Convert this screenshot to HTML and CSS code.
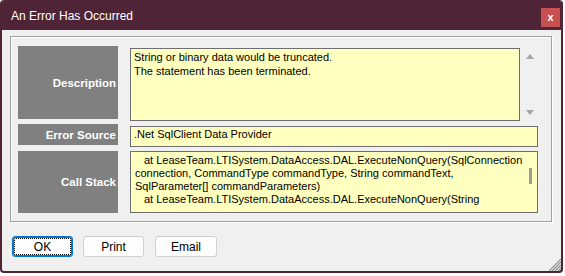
FILE: index.html
```html
<!DOCTYPE html>
<html lang="en">
<head>
    <meta charset="UTF-8">
    <title>An Error Has Occurred</title>
    <link rel="stylesheet" href="styles.css">
</head>
<body>
    <div class="window">
        <div class="titlebar">
            <span class="title">An Error Has Occurred</span>
            <button class="close" type="button">x</button>
        </div>
        <div class="content">
            <div class="group">
                <div class="field field-desc">
                    <div class="label">Description</div>
                    <div class="value value-desc">String or binary data would be truncated.<br>The statement has been terminated.</div>
                    <div class="arrows">
                        <span class="arrow-up"></span>
                        <span class="arrow-down"></span>
                    </div>
                </div>
                <div class="field field-source">
                    <div class="label">Error Source</div>
                    <div class="value value-source">.Net SqlClient Data Provider</div>
                </div>
                <div class="field field-stack">
                    <div class="label">Call Stack</div>
                    <div class="value value-stack">
                        <div class="stack-text">
                            <span class="indent">at LeaseTeam.LTISystem.DataAccess.DAL.ExecuteNonQuery(SqlConnection</span><br>
                            connection, CommandType commandType, String commandText,<br>
                            SqlParameter[] commandParameters)<br>
                            <span class="indent">at LeaseTeam.LTISystem.DataAccess.DAL.ExecuteNonQuery(String</span>
                        </div>
                        <div class="vscroll"><span class="thumb"></span></div>
                    </div>
                </div>
            </div>
            <div class="buttons">
                <button class="btn btn-default" type="button">OK</button>
                <button class="btn" type="button">Print</button>
                <button class="btn" type="button">Email</button>
            </div>
        </div>
        <!-- size grip -->
        <svg class="grip" width="12" height="12" viewBox="0 0 12 12">
            <path d="M12 0 L0 12 M12 3 L3 12 M12 6 L6 12 M12 9 L9 12" stroke="#8a8a8a" stroke-width="1.2" fill="none"/>
        </svg>
    </div>
</body>
</html>
```

FILE: styles.css
```css
body {
    margin: 0;
    background-color: #ffffff;
    font-family: "Liberation Sans", Arial, sans-serif;
    color: #000;
}

.window {
    position: relative;
    width: 563px;
    height: 273px;
    box-sizing: border-box;
    background-color: #f0f0f0;
    border: 2px solid #4f2436;
    border-top: none;
    border-radius: 4px;
    overflow: hidden;
}

.titlebar {
    display: flex;
    justify-content: space-between;
    align-items: flex-start;
    height: 30px;
    margin: 0 -2px;
    padding-left: 11px;
    background-color: #4f2436;
}

.title {
    margin-top: 9px;
    font-size: 12px;
    color: #ffffff;
}

.close {
    width: 19px;
    height: 19px;
    margin-top: 8px;
    margin-right: 3px;
    padding: 0;
    border: none;
    background-color: #c75050;
    color: #ffffff;
    font-family: "Liberation Sans", Arial, sans-serif;
    font-weight: bold;
    font-size: 11px;
    line-height: 19px;
}

.content {
    padding: 6px 9px 0 8px;
}

/* рамка группы */
.group {
    display: flex;
    flex-direction: column;
    padding: 9px 13px 8px 7px;
    border: 1px solid #a0a0a0;
    box-shadow: inset 1px 1px 0 #ffffff, 1px 1px 0 #ffffff;
}

.field {
    display: flex;
    align-items: flex-start;
    gap: 12px;
}

.field-source {
    margin-top: 3px;
}

.field-stack {
    margin-top: 4px;
}

.label {
    display: flex;
    align-items: center;
    justify-content: flex-end;
    flex: none;
    width: 100px;
    box-sizing: border-box;
    padding-right: 2px;
    background-color: #808080;
    color: #ffffff;
    font-weight: bold;
    font-size: 11.5px;
}

.field-desc .label {
    height: 73px;
}

.field-source .label {
    height: 21px;
}

.field-stack .label {
    height: 62px;
}

.value {
    box-sizing: border-box;
    background-color: #ffffc0;
    border: 1px solid #6e6e6e;
    overflow: hidden;
    white-space: nowrap;
}

.value-desc {
    width: 390px;
    height: 73px;
    margin-top: 2px;
    padding: 1px 3px;
    font-size: 11px;
    line-height: 14px;
}

.arrows {
    display: flex;
    flex-direction: column;
    justify-content: space-between;
    width: 18px;
    height: 75px;
    box-sizing: border-box;
    margin-left: -12px;
    padding: 8px 0 6px 6px;
}

.arrow-up {
    width: 0;
    height: 0;
    border-left: 4px solid transparent;
    border-right: 4px solid transparent;
    border-bottom: 5px solid #a6a6a6;
}

.arrow-down {
    width: 0;
    height: 0;
    border-left: 4px solid transparent;
    border-right: 4px solid transparent;
    border-top: 5px solid #a6a6a6;
}

.value-source {
    width: 408px;
    height: 21px;
    margin-top: 2px;
    padding: 0 3px;
    font-size: 11px;
    line-height: 14px;
}

.value-stack {
    display: flex;
    width: 409px;
    height: 62px;
    padding: 2px 0 0 4px;
    font-size: 11px;
    line-height: 13px;
}

.stack-text {
    flex: 1;
}

.indent {
    padding-left: 9px;
}

.vscroll {
    flex: none;
    width: 17px;
}

.thumb {
    display: block;
    width: 3px;
    height: 16px;
    margin-top: 14px;
    margin-left: 7px;
    background-color: #9c9c9c;
}

.buttons {
    display: flex;
    gap: 10px;
    margin-top: 14px;
    padding-left: 2px;
}

.btn {
    width: 61px;
    height: 21px;
    padding: 0;
    background-color: #fdfdfd;
    border: 1px solid #d0d0d0;
    border-radius: 3px;
    font-family: "Liberation Sans", Arial, sans-serif;
    font-size: 12px;
    color: #000;
}

.btn:last-child {
    width: 62px;
    margin-left: 1px;
}

.btn-default {
    border-color: #0078d7;
    box-shadow: inset 0 0 0 1px #0078d7;
    outline: 1px dotted #000;
    outline-offset: -3px;
}

.grip {
    position: absolute;
    right: 0;
    bottom: 0;
}
```
